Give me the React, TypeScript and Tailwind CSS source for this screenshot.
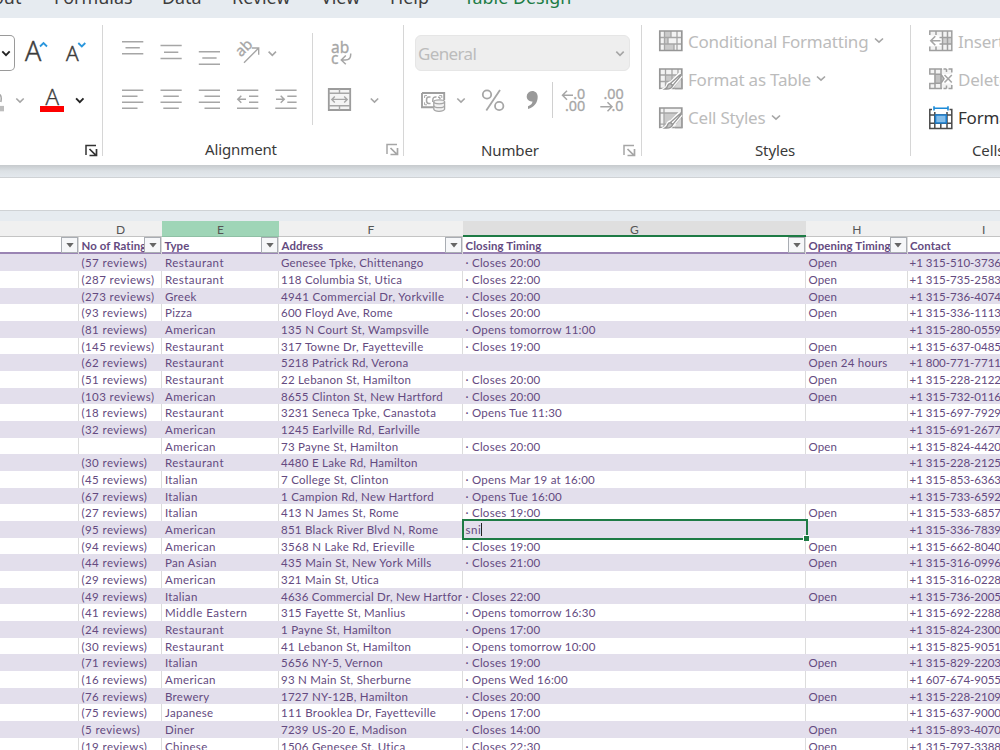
import type { ReactNode } from "react";

const GREY = "#a6a6a6";
const DARK = "#3b3b3b";

/* Every ribbon drawing uses ribbon coordinates, so a cell is a window on that space. */
function Cell({ x, y, w, h = 36, children }: { x: number; y: number; w: number; h?: number; children?: ReactNode }) {
  return (
    <svg className="block shrink-0" width={w} height={h} viewBox={`${x} ${y} ${w} ${h}`} fill="none">
      {children}
    </svg>
  );
}

function Chevron({ x, y, color = GREY, r = 3.7, sw = 1.6 }: { x: number; y: number; color?: string; r?: number; sw?: number }) {
  return <path d={`M${x - r} ${y - r / 2}L${x} ${y + r / 2}L${x + r} ${y - r / 2}`} stroke={color} strokeWidth={sw} />;
}

function Lines({ rows }: { rows: [number, number, number][] }) {
  return <path d={rows.map(([a, b, y]) => `M${a} ${y}H${b}`).join("")} stroke={GREY} strokeWidth="1.5" />;
}

function Launcher({ x, color = GREY }: { x: number; color?: string }) {
  return (
    <Cell x={x} y={143} w={16} h={16}>
      <path d={`M${x + 2} 155V145.5H${x + 12}`} stroke={color} strokeWidth="1.5" />
      <path d={`M${x + 5.5} 149L${x + 12} 155.3M${x + 12.5} 149V155.5H${x + 5.5}`} stroke={color} strokeWidth="1.7" />
    </Cell>
  );
}

function Divider() {
  return <div className="mt-[7px] h-[131px] w-px shrink-0 bg-[#d6d6d6]" />;
}

function FontGroup() {
  return (
    <div className="flex w-[102px] shrink-0 flex-col pt-[17px]">
      <div className="flex h-[36px]">
        <div className="h-[36px] w-[15px] rounded-r-[5px] border border-l-0 border-[#9a9a9a]">
          <Cell x={0} y={36} w={14} h={34}>
            <Chevron x={6} y={53.3} color="#222" sw={1.9} />
          </Cell>
        </div>
        <Cell x={15} y={35} w={40}>
          <text x="25" y="61" fontFamily="Open Sans" fontSize="27" fontWeight="300" fill={DARK} stroke={DARK} strokeWidth=".5">A</text>
          <path d="M40 46.5L43.5 43L47 46.5" stroke="#2b97dd" strokeWidth="1.8" />
        </Cell>
        <Cell x={55} y={35} w={40}>
          <text x="66" y="61" fontFamily="Open Sans" fontSize="21" fontWeight="300" fill={DARK} stroke={DARK} strokeWidth=".5">A</text>
          <path d="M78.3 43L81.8 46.5L85.3 43" stroke="#2b97dd" strokeWidth="1.8" />
        </Cell>
      </div>
      <div className="mt-[11px] flex h-[36px]">
        <Cell x={0} y={82} w={34}>
          <path d="M0 94.5Q2 97 .8 102" stroke={GREY} strokeWidth="1.5" />
          <path d="M0 108.6H4" stroke="#bdbdbd" strokeWidth="5.4" />
          <Chevron x={20} y={100.3} />
        </Cell>
        <Cell x={34} y={82} w={68}>
          <text x="45.5" y="104.5" fontFamily="Open Sans" fontSize="22.5" fontWeight="300" fill={DARK} stroke={DARK} strokeWidth=".4">A</text>
          <path d="M40 109H64" stroke="#fe0000" strokeWidth="6" />
          <Chevron x={79.8} y={100.3} color="#222" sw={1.9} />
        </Cell>
      </div>
      <div className="mt-[25px] flex justify-end pr-[2px]">
        <Launcher x={84} color="#333" />
      </div>
    </div>
  );
}

function GroupLabel({ children }: { children: string }) {
  return <span className="text-[15px] leading-[14px] tracking-[-0.12px] text-[#3a3a3a]">{children}</span>;
}

function AlignmentGroup() {
  return (
    <div className="w-[300px] shrink-0 pt-[15px]">
      <div className="flex">
        <div className="w-[209px] pt-[2px]">
          <div className="flex">
            <Cell x={103} y={35} w={48}><Lines rows={[[122, 143.3, 41.8], [125.5, 139.8, 47.8], [122, 143.3, 53.8]]} /></Cell>
            <Cell x={151} y={35} w={39}><Lines rows={[[160.5, 181.7, 45.6], [164, 178.3, 52.2], [160.5, 181.7, 58.4]]} /></Cell>
            <Cell x={190} y={35} w={39}><Lines rows={[[198.8, 220, 51.8], [202.3, 216.6, 58], [198.8, 220, 64.2]]} /></Cell>
            <Cell x={229} y={35} w={60}>
              <text x="241" y="57.6" transform="rotate(-45 241 57.6)" fontFamily="Noto Sans" fontSize="15" fill={GREY} stroke={GREY} strokeWidth=".3">ab</text>
              <path d="M244 62.7L258.5 48.2M251.8 48H258.7V54.8" stroke={GREY} strokeWidth="1.4" />
              <Chevron x={272.3} y={53.5} />
            </Cell>
          </div>
          <div className="mt-[11px] flex">
            <Cell x={103} y={82} w={48}><Lines rows={[[122, 143.3, 90.3], [122, 137.5, 96.3], [122, 143.3, 102.3], [122, 137.5, 108.3]]} /></Cell>
            <Cell x={151} y={82} w={39}><Lines rows={[[160.5, 181.7, 90.3], [163.3, 178.8, 96.3], [160.5, 181.7, 102.3], [163.3, 178.8, 108.3]]} /></Cell>
            <Cell x={190} y={82} w={39}><Lines rows={[[198.8, 220, 90.3], [204.5, 220, 96.3], [198.8, 220, 102.3], [204.5, 220, 108.3]]} /></Cell>
            <Cell x={229} y={82} w={39}>
              <Lines rows={[[237, 258.3, 90.3], [249, 258.3, 96.3], [249, 258.3, 102.3], [237, 258.3, 108.3]]} />
              <path d="M246 99.3H238M241.3 95.8L237.8 99.3L241.3 102.8" stroke={GREY} strokeWidth="1.5" />
            </Cell>
            <Cell x={268} y={82} w={39}>
              <Lines rows={[[275.3, 296.6, 90.3], [287.3, 296.6, 96.3], [287.3, 296.6, 102.3], [275.3, 296.6, 108.3]]} />
              <path d="M276 99.3H284M280.7 95.8L284.2 99.3L280.7 102.8" stroke={GREY} strokeWidth="1.5" />
            </Cell>
          </div>
        </div>
        <div className="h-[92px] w-px bg-[#d6d6d6]" />
        <div className="pt-[2px]">
          <Cell x={313} y={35} w={80}>
            <text x="331" y="52.5" fontFamily="Noto Sans" fontSize="15.5" fill={GREY} stroke={GREY} strokeWidth=".3">ab</text>
            <text x="331" y="63.5" fontFamily="Noto Sans" fontSize="15.5" fill={GREY} stroke={GREY} strokeWidth=".3">c</text>
            <path d="M350.7 53.5V54.5Q350.7 60 345.5 60H341.5M345.8 55.5L341.3 60L345.8 64.3" stroke={GREY} strokeWidth="1.5" />
          </Cell>
          <div className="mt-[11px]">
            <Cell x={313} y={82} w={80}>
              <path d="M328.8 89H350.2V110H328.8Z" fill="#f4f4f4" stroke="#9c9c9c" strokeWidth="1.8" />
              <path d="M328.8 93.3H350.2M328.8 105.7H350.2M339.5 89V93.3M339.5 105.7V110" stroke={GREY} strokeWidth="1.4" />
              <path d="M332 99.4H347M334.8 96.4L331.8 99.4L334.8 102.4M344.2 96.4L347.2 99.4L344.2 102.4" stroke={GREY} strokeWidth="1.4" />
              <Chevron x={374.5} y={100.3} />
            </Cell>
          </div>
        </div>
      </div>
      <div className="mt-[17px] flex items-start justify-between pr-[2px] pl-[102px]">
        <GroupLabel>Alignment</GroupLabel>
        <Launcher x={384} />
      </div>
    </div>
  );
}

function NumberGroup() {
  return (
    <div className="w-[237px] shrink-0 pt-[17px]">
      <div className="ml-[11px] flex h-[36px] w-[215px] items-center rounded-[6px] border border-[#e6e6e6] bg-[#eeeeee] pl-[2px]">
        <span className="mt-[1px] w-[193px] text-[17px] leading-[34px] tracking-[-0.65px] text-[#bcbcbc]">General</span>
        <Cell x={611} y={45} w={14} h={16}><Chevron x={620} y={53.5} /></Cell>
      </div>
      <div className="mt-[11px] flex">
        <Cell x={404} y={82} w={66}>
          <path d="M422 93H444.2V100M434 107.3H422V93" stroke="#9f9f9f" strokeWidth="1.9" />
          <path d="M424.6 98V95.6H427M424.6 102.3V104.8H427M441.8 98V95.6H439.2" stroke={GREY} strokeWidth="1" />
          <path d="M430.5 97H428.7Q426.5 97 426.5 100.2T428.7 103.4H430.5M436.5 97Q432.8 96.3 432.8 100.2V102M438 97.2Q440 96.8 440 99" stroke={GREY} strokeWidth="1.5" />
          <path d="M433.8 101.8V109.3Q434.5 111.3 439 111.3T444.6 109.3V101.8" fill="#f2f2f2" stroke={GREY} strokeWidth="1.3" />
          <ellipse cx="439.2" cy="101.8" rx="5.4" ry="2" fill="#f2f2f2" stroke={GREY} strokeWidth="1.3" />
          <path d="M433.8 105.7Q434.5 107.7 439.2 107.7T444.6 105.7" stroke={GREY} strokeWidth="1.3" />
          <Chevron x={461} y={100.3} />
        </Cell>
        <Cell x={470} y={82} w={45}>
          <circle cx="487" cy="94.5" r="4.2" stroke={GREY} strokeWidth="1.8" />
          <circle cx="499.2" cy="106" r="4.2" stroke={GREY} strokeWidth="1.8" />
          <path d="M500 90L486.3 110.5" stroke={GREY} strokeWidth="1.8" />
        </Cell>
        <Cell x={515} y={82} w={37}>
          <path d="M537.7 96.8C537.7 103 534 107.5 528 109V106.2C531 105 532.3 103.5 532.5 101.4C529.5 102 526.7 99.8 526.7 96.6A5.4 5.4 0 0 1 532.1 91.1C535.5 91.1 537.7 93.5 537.7 96.8Z" fill="#999" />
        </Cell>
        <div className="h-[36px] w-px bg-[#d0d0d0]" />
        <Cell x={553} y={82} w={40}>
          <path d="M573 95.2H562.5M567 90.7L562.5 95.2L567 99.7" stroke={GREY} strokeWidth="1.5" />
          <text x="573.3" y="99" fontFamily="Noto Sans" fontSize="15" fill={GREY} stroke={GREY} strokeWidth=".3" textLength="12" lengthAdjust="spacingAndGlyphs">.0</text>
          <text x="565" y="110.7" fontFamily="Noto Sans" fontSize="15" fill={GREY} stroke={GREY} strokeWidth=".3" textLength="20.3" lengthAdjust="spacingAndGlyphs">.00</text>
        </Cell>
        <Cell x={593} y={82} w={40}>
          <text x="603.5" y="99" fontFamily="Noto Sans" fontSize="15" fill={GREY} stroke={GREY} strokeWidth=".3" textLength="20.3" lengthAdjust="spacingAndGlyphs">.00</text>
          <text x="611.5" y="110.7" fontFamily="Noto Sans" fontSize="15" fill={GREY} stroke={GREY} strokeWidth=".3" textLength="12" lengthAdjust="spacingAndGlyphs">.0</text>
          <path d="M600.3 106.8H611.8M607.5 102.3L612 106.8L607.5 111.3" stroke={GREY} strokeWidth="1.5" />
        </Cell>
      </div>
      <div className="mt-[25px] flex items-start justify-between pr-[3px] pl-[77px]">
        <GroupLabel>Number</GroupLabel>
        <Launcher x={622} />
      </div>
    </div>
  );
}

const BRUSH = (
  <>
    <path d="M23 8.5L13 20Q11 23.5 7 22.3Q9.5 21 10 18.5Q11 16 13.5 16L22.5 7" fill="#fff" stroke="#fff" strokeWidth="4" />
    <path d="M23.2 8.3L14.6 18.6L12.4 16.6L21.5 8.3Q23 7 23.2 8.3Z" fill="#fff" stroke="#969696" strokeWidth="1.4" />
    <path d="M12.4 16.6L14.6 18.6Q13.5 22.5 6.8 22Q9.5 20.5 9.7 18.6Q10.5 16.6 12.4 16.6Z" fill="#c4c4c4" stroke="#969696" strokeWidth="1.4" />
    <path d="M18.5 18L23.8 12V21.5H16.5Z" fill="#d8d8d8" />
    <path d="M23.8 12V21.5H17" stroke="#9c9c9c" strokeWidth="1.5" />
  </>
);

function ConditionalIcon() {
  return (
    <svg width="26" height="24" viewBox="0 0 26 24" fill="none" className="shrink-0">
      <path d="M1.8 2H23.8V21.5H1.8Z" fill="#f3f3f3" />
      <path d="M6.5 2H13V8.5H6.5ZM6.5 8.5H10V15H6.5ZM6.5 15H16V21.5H6.5Z" fill="#cacaca" />
      <path d="M6.5 2V21.5M13 2V8.5M19 2V21.5M1.8 8.5H23.8M1.8 15H23.8M10 8.5V15M16 15V21.5" stroke={GREY} strokeWidth="1.3" />
      <path d="M1.8 2H23.8V21.5H1.8Z" stroke="#969696" strokeWidth="1.7" />
    </svg>
  );
}

function TableIcon() {
  return (
    <svg width="26" height="24" viewBox="0 0 26 24" fill="none" className="shrink-0">
      <path d="M1.8 2H23.8V21.5H1.8Z" fill="#f3f3f3" />
      <path d="M7.5 8H23.8V21.5H7.5Z" fill="#cacaca" />
      <path d="M7.5 2V21.5M14 2V15M20 2V9M1.8 8H23.8M1.8 14.5H15" stroke={GREY} strokeWidth="1.3" />
      <path d="M1.8 2H23.8V21.5H1.8Z" stroke="#969696" strokeWidth="1.7" />
      {BRUSH}
    </svg>
  );
}

function StylesIcon() {
  return (
    <svg width="26" height="24" viewBox="0 0 26 24" fill="none" className="shrink-0">
      <path d="M1.8 2H23.8V21.5H1.8Z" fill="#f3f3f3" />
      <path d="M6 7H23.8V18H6Z" fill="#cacaca" />
      <path d="M6 2V21.5M1.8 7H23.8M1.8 18.2H10" stroke={GREY} strokeWidth="1.3" />
      <path d="M1.8 2H23.8V21.5H1.8Z" stroke="#969696" strokeWidth="1.7" />
      {BRUSH}
    </svg>
  );
}

function InsertIcon() {
  return (
    <svg width="26" height="24" viewBox="0 0 26 24" fill="none" className="shrink-0">
      <path d="M1.8 2H23.8V21.5H1.8Z" fill="#f3f3f3" />
      <path d="M0 6.5H14V17H0Z" fill="#fff" />
      <path d="M14 8.5H23.8V15H14Z" fill="#cfcfcf" />
      <path d="M1.8 6V2H23.8V21.5H1.8V17.5M8 2V6M14.5 2V21.5M19.5 2V21.5M8 17.5V21.5M11.5 8.5H23.8M11.5 15H23.8" stroke="#9f9f9f" strokeWidth="1.5" />
      <path d="M12.5 11.7H2.8M7.3 7.2L2.8 11.7L7.3 16.2" stroke={GREY} strokeWidth="1.6" />
    </svg>
  );
}

function DeleteIcon() {
  return (
    <svg width="26" height="24" viewBox="0 0 26 24" fill="none" className="shrink-0">
      <path d="M1.8 2H23.8V7H1.8ZM1.8 16.5H23.8V21.5H1.8Z" fill="#f3f3f3" />
      <path d="M6.5 7.5H13L16 11.7L13 16H6.5Z" fill="#c2c2c2" />
      <path d="M14 2H1.8V7H7M7 2V21.5M13 2V21.5M7 16.5H1.8V21.5H14M15.5 2H18.5M20.5 2H23.8V5.5M15.5 21.5H18.5M20.5 21.5H23.8V18M18.5 2V5M18.5 18.5V21.5M7 7.2H13L16 11.7L13 16.3H7" stroke="#9f9f9f" strokeWidth="1.5" />
      <path d="M16.5 8L23.8 15.5M23.8 8L16.5 15.5" stroke={GREY} strokeWidth="1.6" />
    </svg>
  );
}

function FormatIcon() {
  return (
    <svg width="26" height="24" viewBox="0 0 26 24" fill="none" className="shrink-0">
      <path d="M4 3.4H1.8V22.6H23.8V3.4H21.5M6.8 6V22.6M19 6V22.6M1.8 9H23.8M1.8 17.2H23.8M12.8 17.2V22.6" stroke="#4a4a4a" strokeWidth="1.5" />
      <path d="M7.5 9H18.3V17H7.5Z" fill="#83bdea" stroke="#1a7ccc" strokeWidth="1.6" />
      <path d="M6 2.3H20M6 .2V4.5M20 .2V4.5" stroke="#1a8ad8" strokeWidth="1.6" />
    </svg>
  );
}

function Command({ icon, label, tone = "text-[#bcbcbc]", menu = false }: { icon: ReactNode; label: string; tone?: string; menu?: boolean }) {
  return (
    <div className="flex h-[38.3px] items-center">
      {icon}
      <span className={`mt-[1.5px] ml-[4px] text-[17px] leading-[24px] tracking-[-0.22px] whitespace-nowrap ${tone}`}>{label}</span>
      {menu && (
        <svg className="ml-[4.5px]" width="12" height="12" viewBox="0 0 12 12" fill="none">
          <path d="M2 3.5L6 7.2L10 3.5" stroke={GREY} strokeWidth="1.6" />
        </svg>
      )}
    </div>
  );
}

function Ribbon() {
  return (
    <div className="flex h-[147px] shrink-0 overflow-hidden bg-white">
      <FontGroup />
      <Divider />
      <AlignmentGroup />
      <Divider />
      <NumberGroup />
      <Divider />
      <div className="w-[268px] shrink-0 pt-[4px] pl-[16px]">
        <Command icon={<ConditionalIcon />} label="Conditional Formatting" menu />
        <Command icon={<TableIcon />} label="Format as Table" menu />
        <Command icon={<StylesIcon />} label="Cell Styles" menu />
        <div className="mt-[6px] flex pl-[97px]"><GroupLabel>Styles</GroupLabel></div>
      </div>
      <Divider />
      <div className="w-[160px] shrink-0 pt-[4px] pl-[17px]">
        <Command icon={<InsertIcon />} label="Insert" />
        <Command icon={<DeleteIcon />} label="Delete" />
        <Command icon={<FormatIcon />} label="Format" tone="text-[#333]" />
        <div className="mt-[6px] flex pl-[44px]"><GroupLabel>Cells</GroupLabel></div>
      </div>
    </div>
  );
}

const COLS = "grid w-[1060px] grid-cols-[79px_83px_117px_184px_343px_101.5px_152.5px]";

/* rating count, type, address, closing, opening, phone */
const DATA: [string, string, string, string, string, string][] = [
  ["57", "Restaurant", "Genesee Tpke, Chittenango", "· Closes 20:00", "Open", "+1 315-510-3736"],
  ["287", "Restaurant", "118 Columbia St, Utica", "· Closes 22:00", "Open", "+1 315-735-2583"],
  ["273", "Greek", "4941 Commercial Dr, Yorkville", "· Closes 20:00", "Open", "+1 315-736-4074"],
  ["93", "Pizza", "600 Floyd Ave, Rome", "· Closes 20:00", "Open", "+1 315-336-1113"],
  ["81", "American", "135 N Court St, Wampsville", "· Opens tomorrow 11:00", "", "+1 315-280-0559"],
  ["145", "Restaurant", "317 Towne Dr, Fayetteville", "· Closes 19:00", "Open", "+1 315-637-0485"],
  ["62", "Restaurant", "5218 Patrick Rd, Verona", "", "Open 24 hours", "+1 800-771-7711"],
  ["51", "Restaurant", "22 Lebanon St, Hamilton", "· Closes 20:00", "Open", "+1 315-228-2122"],
  ["103", "American", "8655 Clinton St, New Hartford", "· Closes 20:00", "Open", "+1 315-732-0116"],
  ["18", "Restaurant", "3231 Seneca Tpke, Canastota", "· Opens Tue 11:30", "", "+1 315-697-7929"],
  ["32", "American", "1245 Earlville Rd, Earlville", "", "", "+1 315-691-2677"],
  ["", "American", "73 Payne St, Hamilton", "· Closes 20:00", "Open", "+1 315-824-4420"],
  ["30", "Restaurant", "4480 E Lake Rd, Hamilton", "", "", "+1 315-228-2125"],
  ["45", "Italian", "7 College St, Clinton", "· Opens Mar 19 at 16:00", "", "+1 315-853-6363"],
  ["67", "Italian", "1 Campion Rd, New Hartford", "· Opens Tue 16:00", "", "+1 315-733-6592"],
  ["27", "Italian", "413 N James St, Rome", "· Closes 19:00", "Open", "+1 315-533-6857"],
  ["95", "American", "851 Black River Blvd N, Rome", "sni", "", "+1 315-336-7839"],
  ["94", "American", "3568 N Lake Rd, Erieville", "· Closes 19:00", "Open", "+1 315-662-8040"],
  ["44", "Pan Asian", "435 Main St, New York Mills", "· Closes 21:00", "Open", "+1 315-316-0996"],
  ["29", "American", "321 Main St, Utica", "", "", "+1 315-316-0228"],
  ["49", "Italian", "4636 Commercial Dr, New Hartford", "· Closes 22:00", "Open", "+1 315-736-2005"],
  ["41", "Middle Eastern", "315 Fayette St, Manlius", "· Opens tomorrow 16:30", "", "+1 315-692-2288"],
  ["24", "Restaurant", "1 Payne St, Hamilton", "· Opens 17:00", "", "+1 315-824-2300"],
  ["30", "Restaurant", "41 Lebanon St, Hamilton", "· Opens tomorrow 10:00", "", "+1 315-825-9051"],
  ["71", "Italian", "5656 NY-5, Vernon", "· Closes 19:00", "Open", "+1 315-829-2203"],
  ["16", "American", "93 N Main St, Sherburne", "· Opens Wed 16:00", "", "+1 607-674-9055"],
  ["76", "Brewery", "1727 NY-12B, Hamilton", "· Closes 20:00", "Open", "+1 315-228-2109"],
  ["75", "Japanese", "111 Brooklea Dr, Fayetteville", "· Opens 17:00", "", "+1 315-637-9000"],
  ["5", "Diner", "7239 US-20 E, Madison", "· Closes 14:00", "Open", "+1 315-893-4070"],
  ["19", "Chinese", "1506 Genesee St, Utica", "· Closes 22:30", "Open", "+1 315-797-3388"],
];

const HEADINGS = ["", "No of Ratings", "Type", "Address", "Closing Timing", "Opening Timing", "Contact"];
const LETTERS = ["", "D", "E", "F", "G", "H", "I"];

function spacing(column: number, text: string) {
  if (column === 0) {
    if (text === "American") return "tracking-[0.38px]";
    return text === "Restaurant" || text === "Middle Eastern" ? "tracking-[0.46px]" : "tracking-[0.3px]";
  }
  if (column === 1) {
    if (text.endsWith("New Hartford") && text.includes("Commercial")) return "tracking-[0.24px]";
    if (text.endsWith("Yorkville")) return "tracking-[0.38px]";
    if (text.endsWith("ville") || text.endsWith("Mills")) return "tracking-[0.32px]";
    if (text.startsWith("Genesee")) return "tracking-[0.18px]";
    return "tracking-[0.26px]";
  }
  if (column === 2) return "tracking-[0.26px]";
  if (column === 3) return text === "Open" ? "tracking-[0.1px]" : "tracking-[0.26px]";
  return "";
}

function FilterButton() {
  return (
    <span className="flex h-[16px] w-[17px] shrink-0 items-center justify-center border border-[#a9adb3] bg-[#f6f7f9]">
      <svg width="8" height="5" viewBox="0 0 8 5"><path d="M.3 0H7.7L4 4.6Z" fill="#666" /></svg>
    </span>
  );
}

function letterTone(letter: string) {
  if (letter === "E") return "border-b border-[#8fc0a5] bg-[#9fd5b7]";
  if (letter === "G") return "border-b-2 border-[#1e7b45] bg-[#dfdfdf]";
  return "border-b border-[#c4c4c4] bg-[#f0f0f0]";
}

function Sheet() {
  return (
    <div className="min-h-0 flex-1 overflow-hidden bg-white">
      <div className={`${COLS} h-[16px] grid-rows-[16px]`}>
        {LETTERS.map((l, i) => (
          <div key={i} className={`flex h-[16px] justify-center pt-[1px] text-[12px] leading-[16px] text-[#555] ${letterTone(l)}`}>{l}</div>
        ))}
      </div>
      <div className={`${COLS} h-[17.3px] border-b-2 border-[#9a84b3]`}>
        {HEADINGS.map((h, i) => (
          <div key={i} className="flex min-w-0 border-r border-[#d9d9d9]">
            <span className="min-w-0 flex-1 overflow-hidden pl-[2.5px] text-[11.4px] leading-[18px] font-bold tracking-[0.12px] whitespace-nowrap text-[#644a80]">{h}</span>
            {i < 6 && <FilterButton />}
          </div>
        ))}
      </div>
      {DATA.map(([n, ...rest], r) => {
        const active = rest[2] === "sni";
        const line = r % 2 ? "border-r border-[#dcdcdc]" : "border-r border-transparent";
        return (
          <div key={r} className={`${COLS} h-[16.68px] text-[11.5px] leading-[17px] whitespace-nowrap text-[#644a80] ${r % 2 ? "bg-white" : "bg-[#e3dfec]"}`}>
            <div className={line} />
            <div className={`overflow-hidden pl-[2.5px] tracking-[0.42px] ${line}`}>{n && `(${n} reviews)`}</div>
            {rest.map((t, i) =>
              active && i === 2 ? (
                <div key={i} className="relative pl-[2.5px] tracking-[0.55px]">
                  <span className="border-r border-[#222]">{t}</span>
                  <div className="absolute -top-[2px] -right-[1.5px] -bottom-[2px] -left-[1px] border-2 border-[#1e7b45]" />
                  <div className="absolute -right-[2.5px] -bottom-[2.5px] h-[6px] w-[6px] border-t border-l border-white bg-[#1e7b45]" />
                </div>
              ) : (
                <div key={i} className={`overflow-hidden ${i === 4 ? "pl-[2px]" : i === 0 ? "pl-[3px]" : i === 1 ? "pl-[2px]" : "pl-[2.5px]"} ${spacing(i, t)} ${line}`}>{t}</div>
              ),
            )}
          </div>
        );
      })}
    </div>
  );
}

export default function App() {
  return (
    <div className="flex h-[750px] w-[1000px] flex-col overflow-hidden bg-[#e6ebf0] font-['Noto_Sans',sans-serif]">
      <div className="flex h-[18px] shrink-0 text-[17.9px] leading-[20px] whitespace-nowrap text-[#3d3d3d]">
        <div className="-mt-[13px] flex">
          <span className="flex w-[54px]"><span className="-ml-[7px]">out</span></span>
          <span className="w-[108px]">Formulas</span>
          <span className="w-[70px]">Data</span>
          <span className="w-[89px]">Review</span>
          <span className="w-[69px]">View</span>
          <span className="w-[74px]">Help</span>
          <span className="text-[#1c7c45]">Table Design</span>
        </div>
      </div>
      <Ribbon />
      <div className="h-[12px] shrink-0 bg-linear-to-b from-[#c6cacd] via-[#dce1e5] to-[#e3e8ed]" />
      <div className="h-[34px] shrink-0 border-y border-[#cfd2d5] bg-white" />
      <div className="h-[10px] shrink-0 bg-[#e6ebf0]" />
      <div className="flex min-h-0 flex-1 flex-col font-['Lato',sans-serif]">
        <Sheet />
      </div>
    </div>
  );
}
